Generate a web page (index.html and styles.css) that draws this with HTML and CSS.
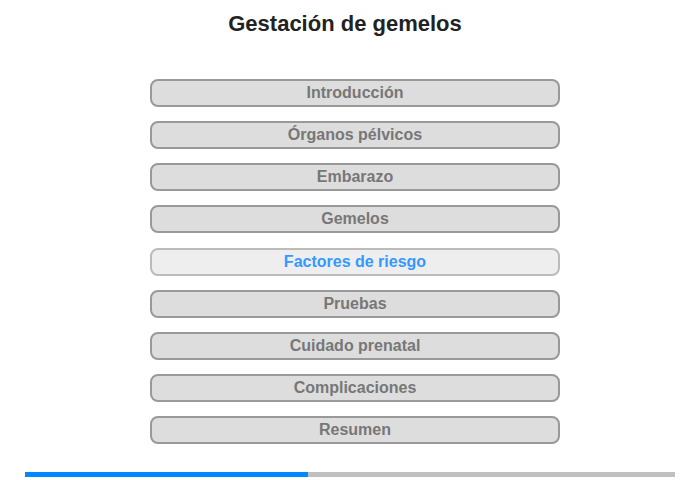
FILE: index.html
```html
<!DOCTYPE html>
<html lang="es">
<head>
  <meta charset="UTF-8">
  <title>Gestación de gemelos</title>
  <link rel="stylesheet" href="styles.css">
</head>
<body>
  <div class="page">
    <h1 class="title">Gestación de gemelos</h1>
    <div class="menu">
      <button class="item">Introducción</button>
      <button class="item">Órganos pélvicos</button>
      <button class="item">Embarazo</button>
      <button class="item">Gemelos</button>
      <button class="item active">Factores de riesgo</button>
      <button class="item">Pruebas</button>
      <button class="item">Cuidado prenatal</button>
      <button class="item">Complicaciones</button>
      <button class="item">Resumen</button>
    </div>
    <div class="progress">
      <div class="progress-fill" style="width: 43.5%"></div>
    </div>
  </div>
</body>
</html>
```

FILE: styles.css
```css
body {
  font-family: 'Liberation Sans', Arial, sans-serif;
  background-color: white;
  margin: 0;
  padding: 0;
}
.page {
  width: 700px;
  height: 480px;
  display: flex;
  flex-direction: column;
  align-items: center;
}
.title {
  font-size: 22px;
  font-weight: bold;
  color: #222;
  margin: 11px 10px 0 0;
  line-height: 25px;
}
.menu {
  display: flex;
  flex-direction: column;
  gap: 14.15px;
  margin: 43px 0 0 10px;
}
.item {
  width: 410px;
  height: 28px;
  box-sizing: border-box;
  background-color: #dddddd;
  border: 2px solid #999;
  border-radius: 8px;
  font-family: 'Liberation Sans', Arial, sans-serif;
  font-size: 16px;
  font-weight: bold;
  color: #777;
  padding: 0;
  cursor: pointer;
}
.item.active {
  background-color: #eeeeee;
  border-color: #bbb;
  color: #3399ff;
}
.progress {
  width: 650px;
  height: 5px;
  background-color: #c0c0c0;
  margin-top: auto;
  margin-bottom: 3px;
}
.progress-fill {
  height: 100%;
  background-color: #0088ff;
}
```
